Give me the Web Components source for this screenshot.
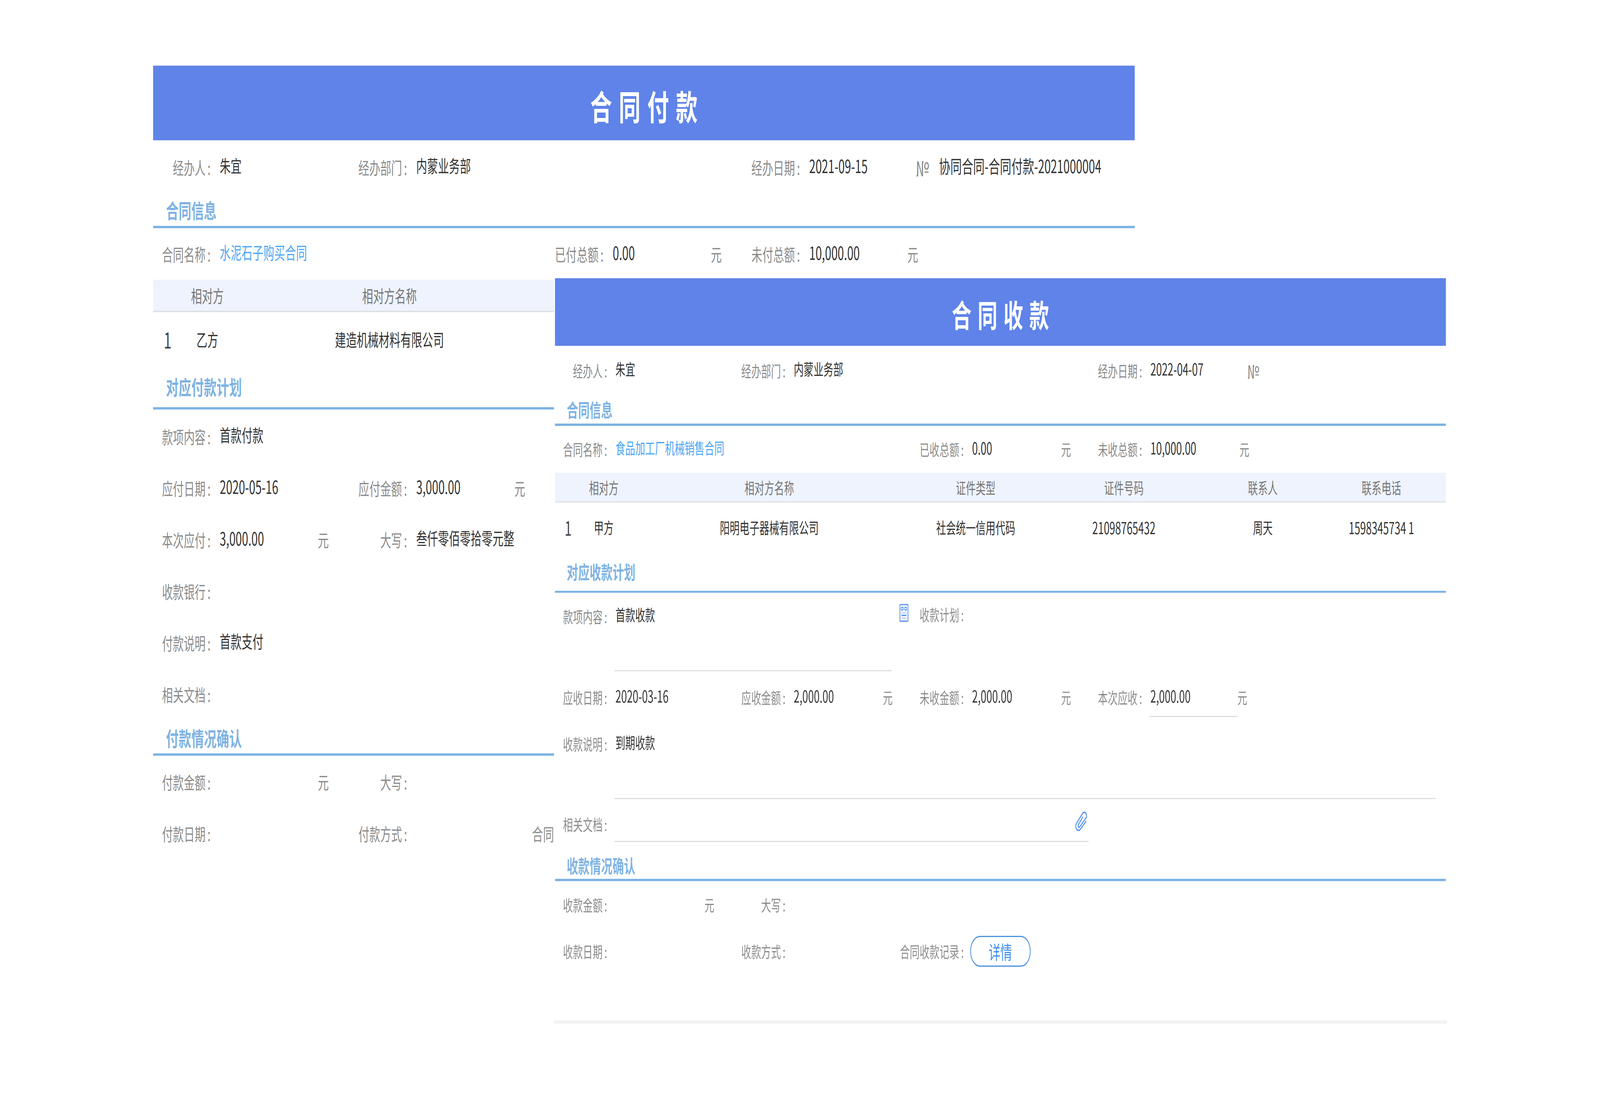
<!DOCTYPE html>
<html lang="zh-CN">
<head>
<meta charset="utf-8">
<title>合同</title>
<style>
html,body{margin:0;padding:0;background:#fff;overflow:hidden}
body{font-family:"Noto Sans CJK SC","Noto Sans",sans-serif;font-size:44px;color:#333}
</style>
</head>
<body>
<contract-desk>

<contract-form heading="合同付款" style="left:618px;top:168px;--gut:0px">
  <f-row style="--h:138px">
    <f-field label="经办人" plain>朱宜</f-field>
    <f-field label="经办部门" plain style="--span:2">内蒙业务部</f-field>
    <f-field label="经办日期" num plain>2021-09-15</f-field>
    <f-field label="№" bare num plain style="--nx:-92px;--lf:54px">协同合同-合同付款-2021000004</f-field>
  </f-row>
  <f-section style="--sh:87px">合同信息</f-section>
  <f-row>
    <f-field label="合同名称" link plain style="--span:2">水泥石子购买合同</f-field>
    <f-field label="已付总额" num unit="元">0.00</f-field>
    <f-field label="未付总额" num unit="元">10,000.00</f-field>
  </f-row>
  <t-row head style="--tc:117px 204px 1266px 1fr;--rh:83px"><span></span><span>相对方</span><span>相对方名称</span><span></span></t-row>
  <t-row style="--tc:117px 204px 1266px 1fr;--rh:138px"><span class="idx" style="font-size:56px;color:#444">1</span><span>乙方</span><span>建造机械材料有限公司</span><span></span></t-row>
  <f-section style="--sh:111px">对应付款计划</f-section>
  <f-row style="margin-top:3px"><f-field label="款项内容" plain style="--span:4">首款付款</f-field></f-row>
  <f-row>
    <f-field label="应付日期" num plain>2020-05-16</f-field>
    <f-field label="应付金额" num unit="元">3,000.00</f-field>
  </f-row>
  <f-row>
    <f-field label="本次应付" num unit="元">3,000.00</f-field>
    <f-field label="大写" plain style="--span:2">叁仟零佰零拾零元整</f-field>
  </f-row>
  <f-row><f-field label="收款银行" plain></f-field></f-row>
  <f-row><f-field label="付款说明" plain style="--span:4">首款支付</f-field></f-row>
  <f-row><f-field label="相关文档" plain></f-field></f-row>
  <f-section style="--sh:91px;--st:5px">付款情况确认</f-section>
  <f-row style="margin-top:1px">
    <f-field label="付款金额" unit="元"></f-field>
    <f-field label="大写" plain></f-field>
  </f-row>
  <f-row>
    <f-field label="付款日期" plain></f-field>
    <f-field label="付款方式" plain></f-field>
    <f-field label="合同" bare plain style="--lw:32px"></f-field>
  </f-row>
</contract-form>

<contract-form heading="合同收款" closing style="left:2236px;top:712px;--z:.9076;--gut:4.4px">
  <f-row style="--h:138px">
    <f-field label="经办人" plain>朱宜</f-field>
    <f-field label="经办部门" plain style="--span:2">内蒙业务部</f-field>
    <f-field label="经办日期" num plain>2022-04-07</f-field>
    <f-field label="№" bare plain style="--nx:-92px;--lf:54px"></f-field>
  </f-row>
  <f-section style="--sh:87px">合同信息</f-section>
  <f-row>
    <f-field label="合同名称" link plain style="--span:2">食品加工厂机械销售合同</f-field>
    <f-field label="已收总额" num unit="元">0.00</f-field>
    <f-field label="未收总额" num unit="元">10,000.00</f-field>
  </f-row>
  <t-row head style="--tc:117px 200px 1272px 564px 754px 482px 1fr;--rh:84px;margin-top:1px"><span></span><span>相对方</span><span>相对方名称</span><span>证件类型</span><span>证件号码</span><span>联系人</span><span>联系电话</span></t-row>
  <t-row style="--tc:117px 200px 1272px 564px 754px 482px 1fr;--rh:139px"><span class="idx" style="font-size:56px;color:#444">1</span><span>甲方</span><span>阳明电子器械有限公司</span><span>社会统一信用代码</span><span style="font-size:46px">21098765432</span><span>周天</span><span style="font-size:46px">1598345734 1</span></t-row>
  <f-section style="--sh:115px">对应收款计划</f-section>
  <f-row style="--h:221px;--pt:31px;--al:start">
    <f-field label="款项内容" ul style="--span:2;--pb:127px;--vw:1232px">首款收款<svg slot="after" width="41" height="52" viewBox="0 0 41 52" style="margin:0 0 18px 35px;display:block"><rect x="2.5" y="2.5" width="36" height="47" rx="2.5" fill="#fff" stroke="#5b8ff2" stroke-width="3.5"/><rect x="9" y="10" width="8" height="8" rx="2" fill="none" stroke="#5b8ff2" stroke-width="3"/><rect x="24" y="10" width="8" height="8" rx="2" fill="none" stroke="#5b8ff2" stroke-width="3"/><path d="M9 26h23" stroke="#b9c8f5" stroke-width="3"/><path d="M9 33h23" stroke="#4c93ee" stroke-width="3.5"/><path d="M9 40h23" stroke="#b9c8f5" stroke-width="3"/></svg></f-field>
    <f-field label="收款计划" plain></f-field>
  </f-row>
  <f-row style="--h:148px">
    <f-field label="应收日期" num plain>2020-03-16</f-field>
    <f-field label="应收金额" num unit="元">2,000.00</f-field>
    <f-field label="未收金额" num unit="元">2,000.00</f-field>
    <f-field label="本次应收" num ul unit="元" style="--pb:27px">2,000.00</f-field>
  </f-row>
  <f-row style="--h:213px;--pt:22px;--al:start">
    <f-field label="收款说明" ul style="--span:5;--pb:128px;--vw:3652px">到期收款</f-field>
  </f-row>
  <f-row style="--h:129px;--pt:40px;--al:start">
    <f-field label="相关文档" ul style="--span:4;--pb:26px;--vw:2109px"><svg slot="tail" width="53" height="60" viewBox="20 20 48 54" style="display:block;margin:-8px 6px 0 0;overflow:visible"><path d="M63 48L42 67C36 72 28 72 24 66C21 62 22 57 25 53L50 27C55 23 62 24 64 29C66 33 65 37 62 40L38 62C35 64 31 62 32 58C32 57 33 56 34 55L50 37" fill="none" stroke="#4f8ff0" stroke-width="3.4" stroke-linecap="round" stroke-linejoin="round"/></svg></f-field>
  </f-row>
  <f-section style="--sh:102px;--st:18px">收款情况确认</f-section>
  <f-row>
    <f-field label="收款金额" unit="元"></f-field>
    <f-field label="大写" plain></f-field>
  </f-row>
  <f-row>
    <f-field label="收款日期" plain></f-field>
    <f-field label="收款方式" plain></f-field>
    <f-field label="合同收款记录" plain style="--span:2"><pill-button>详情</pill-button></f-field>
  </f-row>
</contract-form>

</contract-desk>

<script>
class ContractDesk extends HTMLElement{
  constructor(){super();this.attachShadow({mode:'open'}).innerHTML=`<style>
    :host{display:block;width:100vw;height:100vh;overflow:hidden;background:#fff}
    .sheet{position:relative;width:6458px;height:2833px;transform-origin:0 0}
  </style><div class="sheet"><slot></slot></div>`;}
  connectedCallback(){
    /* the sheet is 6458×2833: it is fitted to whatever window really opened */
    this.shadowRoot.querySelector('.sheet').style.transform=`scale(${innerWidth/6458},${innerHeight/2833})`;
  }
}
class ContractForm extends HTMLElement{
  constructor(){super();this.attachShadow({mode:'open'});}
  connectedCallback(){
    const closing=this.hasAttribute('closing');
    this.shadowRoot.innerHTML=`<style>
      :host{display:block;position:absolute;background:#fff}
      .z{zoom:var(--z,1);width:3962px;padding:0 var(--gut,0px);}
      .banner{height:191px;box-sizing:border-box;padding:10px 0 0 27px;display:flex;align-items:center;justify-content:center;
        background:#5f83e8;color:#fff;font-size:88px;font-weight:700;letter-spacing:27px;line-height:1}
      .end{height:10px;background:#f3f3f3;margin:0 calc(-1*var(--gut,0px));}
      .gap{height:128px}
    </style><div class="z"><div class="banner">${this.getAttribute('heading')}</div><slot></slot>${closing?'<div class="gap"></div><div class="end"></div>':''}</div>`;
  }
}
class FRow extends HTMLElement{
  constructor(){super();this.attachShadow({mode:'open'}).innerHTML=`<style>
    :host{display:grid;box-sizing:border-box;height:var(--h,132px);padding-top:var(--pt,0px);
      grid-template-columns:repeat(5,793px);align-items:var(--al,center)}
  </style><slot></slot>`;}
}
class FField extends HTMLElement{
  constructor(){super();this.attachShadow({mode:'open'});}
  connectedCallback(){
    const a=n=>this.hasAttribute(n), unit=this.getAttribute('unit');
    const bare=a('bare');
    this.shadowRoot.innerHTML=`<style>
      :host{display:flex;align-items:center;min-width:0;grid-column:span var(--span,1);white-space:nowrap;margin-left:var(--nx,0px)}
      .l{flex:none;width:var(--lw,${bare?52:232}px);display:flex;justify-content:flex-end;color:#8b8b8b;line-height:60px;font-size:var(--lf,44px)}
      .c{margin-left:8px;${bare?'display:none':''}}
      .v{flex:none;box-sizing:border-box;margin-left:${bare?35:32}px;padding-left:5px;line-height:60px;padding-bottom:10px;color:#333;
        display:flex;justify-content:space-between;align-items:flex-start;
        ${a('plain')?'':'width:calc(var(--vw,396px) + 5px);'}
        ${a('num')?'font-size:46px;':''}
        ${a('link')?'color:#4ba5f6;':''}
        ${a('ul')?'padding-bottom:var(--pb);border-bottom:4px solid #dedede;margin-bottom:calc(6px - var(--pb));width:var(--vw,392px);':''}}
      .u{flex:none;color:#8b8b8b;line-height:60px}
    </style><span class="l"><span>${this.getAttribute('label')}</span><span class="c">:</span></span><span class="v"><span><slot></slot></span><slot name="tail"></slot></span>${unit?`<span class="u">${unit}</span>`:''}<slot name="after"></slot>`;
  }
}
class FSection extends HTMLElement{
  constructor(){super();this.attachShadow({mode:'open'}).innerHTML=`<style>
    :host{box-sizing:border-box;height:var(--sh,87px);display:flex;flex-direction:column}
    .t{flex:1;min-height:0;box-sizing:border-box;padding:var(--st,0px) 0 0 52px;display:flex;align-items:center;
      color:#7fb3e3;font-size:51px;font-weight:700;line-height:1}
    .r{flex:none;height:6px;background:#7cb3e3}
  </style><div class="t"><slot></slot></div><div class="r"></div>`;}
}
class TRow extends HTMLElement{
  constructor(){super();this.attachShadow({mode:'open'});}
  connectedCallback(){
    const head=this.hasAttribute('head');
    this.shadowRoot.innerHTML=`<style>
      :host{display:grid;box-sizing:border-box;height:var(--rh);grid-template-columns:var(--tc);align-items:center;
        text-align:center;white-space:nowrap;line-height:60px;
        ${head?'background:#eef3fd;border-bottom:4px solid #dfe1e5;color:#777;':'color:#333;'}}
    </style><slot></slot>`;
  }
}
class PillButton extends HTMLElement{
  constructor(){super();this.attachShadow({mode:'open'}).innerHTML=`<style>
    :host{display:flex;align-items:center;justify-content:center;box-sizing:border-box;width:268px;height:88px;
      margin:10px 0 0 -8px;border:4.4px solid #4a90e2;border-radius:44px;color:#3c8ef0;font-size:52px;line-height:1}
  </style><slot></slot>`;}
}
customElements.define('contract-desk',ContractDesk);
customElements.define('contract-form',ContractForm);
customElements.define('f-row',FRow);
customElements.define('f-field',FField);
customElements.define('f-section',FSection);
customElements.define('t-row',TRow);
customElements.define('pill-button',PillButton);
</script>
</body>
</html>
